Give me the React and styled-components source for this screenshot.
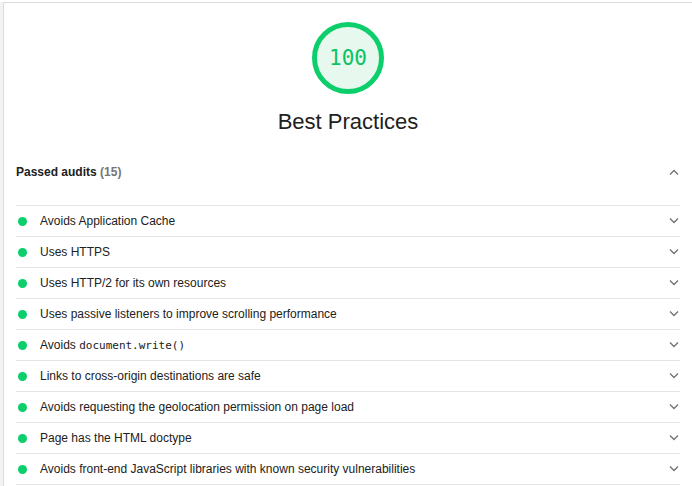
import React from "react";
import styled, { createGlobalStyle } from "styled-components";

const GlobalStyle = createGlobalStyle`
  html, body {
    margin: 0;
    padding: 0;
    background: #f3f3f3;
  }
  body {
    font-family: "Liberation Sans", Arial, sans-serif;
    color: #212121;
  }
`;

const audits = [
  { title: "Avoids Application Cache" },
  { title: "Uses HTTPS" },
  { title: "Uses HTTP/2 for its own resources" },
  { title: "Uses passive listeners to improve scrolling performance" },
  { title: "Avoids ", code: "document.write()" },
  { title: "Links to cross-origin destinations are safe" },
  { title: "Avoids requesting the geolocation permission on page load" },
  { title: "Page has the HTML doctype" },
  { title: "Avoids front-end JavaScript libraries with known security vulnerabilities" },
];

function Chevron({ up }) {
  return (
    <svg width="10" height="6" viewBox="0 0 10 6">
      <polyline
        points={up ? "1,5.5 5,1.5 9,5.5" : "1,0.5 5,4.5 9,0.5"}
        fill="none"
        stroke="#757575"
        strokeWidth="1.4"
      />
    </svg>
  );
}

function Gauge({ score }) {
  return (
    <GaugeBox>
      <svg width="72" height="72" viewBox="0 0 72 72">
        <circle cx="36" cy="36" r="33.5" fill="#e7f9ef" stroke="#0cce6b" strokeWidth="5" />
      </svg>
      <GaugeScore>{score}</GaugeScore>
    </GaugeBox>
  );
}

export default function App() {
  return (
    <>
      <GlobalStyle />
      <Page>
        <Sheet>
          <Gauge score={100} />
          <Title>Best Practices</Title>
          <Group>
            <GroupHeader>
              <span>
                Passed audits <Count>(15)</Count>
              </span>
              <ChevronSlot>
                <Chevron up />
              </ChevronSlot>
            </GroupHeader>
            <List>
              {audits.map((a, i) => (
                <Row key={i}>
                  <Dot />
                  <RowText>
                    {a.title}
                    {a.code && <Code>{a.code}</Code>}
                  </RowText>
                  <ChevronSlot>
                    <Chevron />
                  </ChevronSlot>
                </Row>
              ))}
            </List>
          </Group>
        </Sheet>
      </Page>
    </>
  );
}

const Page = styled.div`
  padding-left: 3px;
  padding-top: 2px;
  height: 486px;
  box-sizing: border-box;
  overflow: hidden;
  background: linear-gradient(to bottom, #ffffff 2px, #f3f3f3 2px);
`;

const Sheet = styled.div`
  background: #fff;
  border-left: 1px solid #dcdcdc;
  border-top: 1px solid #dcdcdc;
  height: 100%;
  display: flex;
  flex-direction: column;
  align-items: center;
  box-sizing: border-box;
`;

const GaugeBox = styled.div`
  position: relative;
  width: 72px;
  height: 72px;
  margin-top: 19px;
  svg {
    display: block;
  }
`;

const GaugeScore = styled.div`
  position: absolute;
  inset: 0;
  display: flex;
  align-items: center;
  justify-content: center;
  font-family: "DejaVu Sans Mono", "Liberation Mono", monospace;
  font-size: 21px;
  color: #0cc266;
`;

const Title = styled.div`
  margin-top: 15px;
  font-size: 22px;
  line-height: 26px;
  color: #212121;
`;

const Group = styled.div`
  align-self: stretch;
  margin: 21px 12px 0 12px;
`;

const GroupHeader = styled.div`
  height: 32px;
  display: flex;
  align-items: center;
  justify-content: space-between;
  font-size: 12px;
  font-weight: bold;
  color: #212121;
`;

const Count = styled.span`
  color: #757575;
`;

const ChevronSlot = styled.div`
  width: 14px;
  display: flex;
  justify-content: center;
  margin-right: -1px;
  svg {
    display: block;
  }
`;

const List = styled.div`
  margin-top: 17px;
  border-top: 1px solid #e4e4e4;
`;

const Row = styled.div`
  height: 30px;
  border-bottom: 1px solid #e4e4e4;
  display: flex;
  align-items: center;
  font-size: 12px;
`;

const Dot = styled.span`
  width: 9px;
  height: 9px;
  border-radius: 50%;
  background: #0cce6b;
  margin-left: 2px;
  margin-right: 13px;
  flex-shrink: 0;
`;

const RowText = styled.span`
  flex: 1;
  color: #212121;
`;

const Code = styled.code`
  font-family: "DejaVu Sans Mono", "Liberation Mono", monospace;
  font-size: 11px;
  color: #212121;
`;
